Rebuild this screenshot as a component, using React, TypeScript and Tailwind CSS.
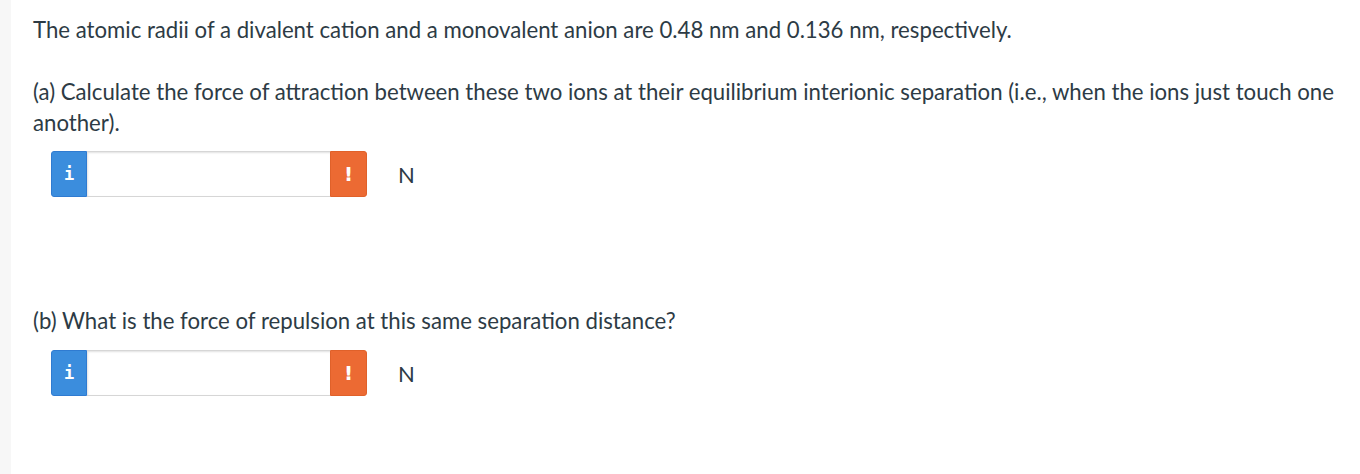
export default function App() {
  const Field = () => (
    <div className="flex items-center">
      <div className="flex h-[46px] w-[316px]">
        <div className="flex w-[36px] items-center justify-center rounded-l-[3px] border border-[#2f7bd1] bg-[#3b8ddd] text-white">
          <span className="font-['DejaVu_Sans_Mono'] text-[17px] font-bold leading-none">i</span>
        </div>
        <div className="flex-1 border-y border-[#d6d6d6] bg-white shadow-[inset_1px_1px_2px_rgba(0,0,0,0.12)]" />
        <div className="flex w-[37px] items-center justify-center rounded-r-[3px] border border-[#e0612a] bg-[#ec6a33] text-white">
          <span className="font-['DejaVu_Sans'] text-[20px] font-extrabold leading-none">!</span>
        </div>
      </div>
      <span className="ml-[31px] text-[22px] text-[#2d3b45]">N</span>
    </div>
  );
  return (
    <div className="flex h-[474px] w-[1360px] bg-white font-['Lato',sans-serif] text-[#2d3b45]">
      <div className="w-[11px] shrink-0 bg-[#f7f7f7]" />
      <div className="flex-1 pl-[22px] pr-[10px] pt-[14px]">
        <p className="text-[22.2px] leading-[31px]">
          The atomic radii of a divalent cation and a monovalent anion are 0.48 nm and 0.136 nm, respectively.
        </p>
        <p className="mt-[31px] text-[22.2px] leading-[31px]">
          (a) Calculate the force of attraction between these two ions at their equilibrium interionic separation (i.e., when the ions just touch one another).
        </p>
        <div className="ml-[18px] mt-[13px]">
          <Field />
        </div>
        <p className="mt-[108px] text-[22.2px] leading-[31px]">
          (b) What is the force of repulsion at this same separation distance?
        </p>
        <div className="ml-[18px] mt-[14px]">
          <Field />
        </div>
      </div>
    </div>
  );
}
